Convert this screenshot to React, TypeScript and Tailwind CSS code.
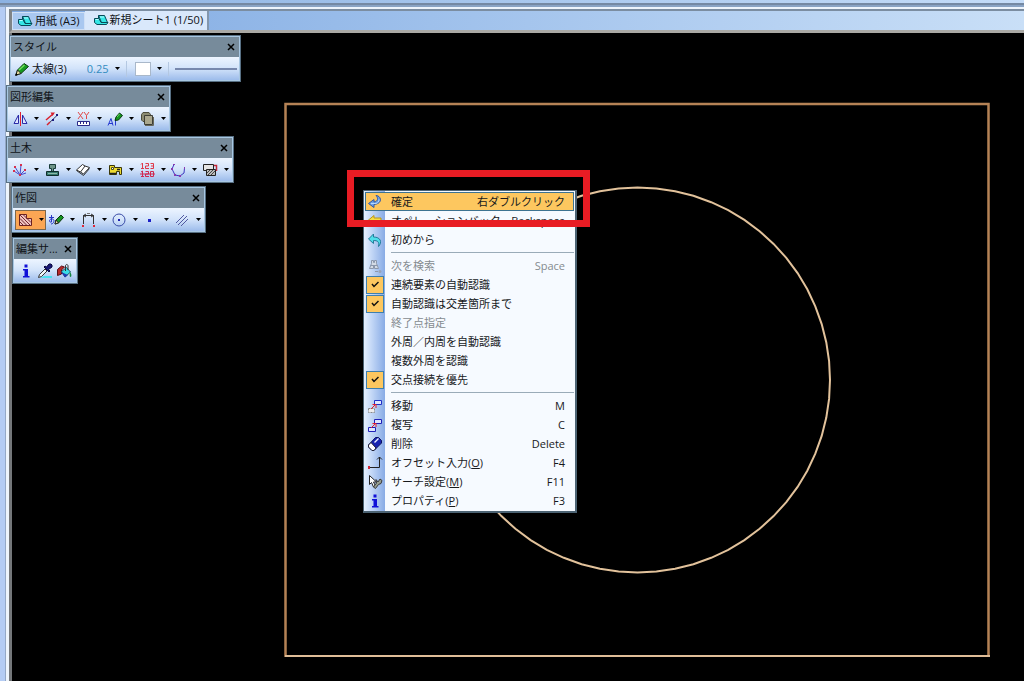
import React from "react";

type IconProps = { children: React.ReactNode };

function Icon({ children }: IconProps) {
  return (
    <svg viewBox="0 0 16 16" className="h-4 w-4 shrink-0" fill="none" aria-hidden="true">
      {children}
    </svg>
  );
}

function Arrow() {
  return (
    <svg viewBox="0 0 5 3" className="h-[3px] w-[5px] shrink-0" aria-hidden="true">
      <path d="M0 0h5L2.5 3z" fill="#000" />
    </svg>
  );
}

const SheetIcon = () => (
  <svg viewBox="0 0 16 12" className="h-3 w-4 shrink-0" aria-hidden="true">
    <path d="M5.5 1.5h6l3 7h-6z" fill="#35e6e6" stroke="#064a58" />
    <path d="M5.5 1.5v3h-4v4l2.5 2h9.500l1.500-2H8l-2-4" fill="#35e6e6" stroke="#064a58" />
    <path d="M2.5 5.500h3M7 3h4" stroke="#b5ffff" />
  </svg>
);

const PencilIcon = () => (
  <Icon>
    <path d="M2 14l1.5-5L10 2.5l4.500 3L7 12.500z" fill="#169a20" stroke="#0b3d10" />
    <path d="M5 9l5.500-5" stroke="#6fe05a" strokeWidth="1.5" />
    <path d="M2 14l1.500-5L7 12.500z" fill="#f4e9a6" stroke="#222" />
    <path d="M1 15l1-3 2 2z" fill="#000" />
  </Icon>
);
const MirrorIcon = () => (
  <Icon>
    <path d="M6.5 4v8.500H2zM10.500 4v8.500H15z" fill="#dfe5ff" stroke="#2a2aa8" />
    <path d="M8.5 1v14" stroke="#e02030" />
  </Icon>
);
const TrimIcon = () => (
  <Icon>
    <path d="M2 9l7-6" stroke="#d8202c" strokeWidth="1.5" />
    <path d="M6.500 1.5H11L8.500 5z" fill="#d8202c" />
    <path d="M3 14L14 3.500" stroke="#333a66" />
    <path d="M3 14l3-3" stroke="#d8202c" strokeWidth="1.5" />
    <path d="M12 3h2v2h-2zM8 8h2v2H8z" fill="#1c1c80" />
  </Icon>
);
const XYIcon = () => (
  <Icon>
    <path d="M3 1l5 7M8 1L3 8M9 1l2.500 3.500L14 1M11.500 4.500V8" stroke="#e04848" />
    <path d="M2.500 10.500h12v4h-12z" fill="#fff" stroke="#2a2a88" />
    <path d="M5.500 11v2M8.500 11v2M11.500 11v2" stroke="#2a2a88" />
  </Icon>
);
const TextPencilIcon = () => (
  <Icon>
    <path d="M1 14.500l3-7 2 7M2 12.500h4M8.500 14.500V8" stroke="#2438d0" />
    <path d="M8 9.500l1-3.500 3.500-4 3 2.500-4 4.500z" fill="#159520" stroke="#0a3510" />
    <path d="M10 6l2.500-3" stroke="#6ce060" />
  </Icon>
);
const LayersIcon = () => (
  <Icon>
    <path d="M2.500 3.500l1.500-2h6l1.500 2v6l-1.500 1H4L2.500 9z" fill="#8b8b72" stroke="#4b4b3c" />
    <path d="M5.500 4.500h8v9h-8z" fill="#aaa78e" stroke="#3e3e36" />
    <path d="M6 14.500h8.500V6" stroke="#68685c" />
  </Icon>
);
const RaysIcon = () => (
  <Icon>
    <path d="M8 13L3 5M8 13l1-10M8 13l5-5M8 13l6-2M8 13L2 9" stroke="#4a4ac8" />
    <path d="M2 4h2v2H2zM8 2h2v2H8zM12 7h2v2h-2zM7 12h2v2H7zM1 8h2v2H1z" fill="#d8304c" />
  </Icon>
);
const StampIcon = () => (
  <Icon>
    <path d="M5.500 2.500h6v4h-2v3h-2v-3h-2z" fill="#6d9488" stroke="#173c38" />
    <path d="M2.500 9.500h12v4h-12z" fill="#377a70" stroke="#102e2c" />
    <path d="M4 11.500h9" stroke="#8eb9a8" />
  </Icon>
);
const BookIcon = () => (
  <Icon>
    <path d="M1.500 8l6-5.500L10 4l4.500 1.500-6 6.500L5.500 10z" fill="#fff" stroke="#333" />
    <path d="M10 4l-4.500 6M1.500 8.500l7 5 6-7" stroke="#333" />
  </Icon>
);
const ExcavatorIcon = () => (
  <Icon>
    <path d="M2.500 3.500h5v2h7v7h-2v-3h-3v3h-7z" fill="#eedb30" stroke="#3a3708" />
    <path d="M4.500 5.500h2v2h-2z" fill="#fff" stroke="#4b4b20" />
    <path d="M3 11.500h6M10 7.500h3" stroke="#222" strokeWidth="1.5" />
  </Icon>
);
const NumbersIcon = () => (
  <Icon>
    <path d="M2 2.500L3.500 1v5.500M2 6.500h3M6.500 1.500h3v2.500h-3v2.500H10M11.500 1.500h3v5h-3M12 4h3" stroke="#e03848" />
    <path d="M2 10l1.500-1v5.500M2 14.500h3M6.500 9.500h3V12h-3v2.500H10M11.500 9.500h3v5h-3zM1 12h15" stroke="#d02850" />
  </Icon>
);
const PolygonIcon = () => (
  <Icon>
    <path d="M4 2.500L2 7l3 6 5 1 4-3 .5-5" stroke="#3c38c0" />
    <path d="M3 2h2v1H3zM1 6h2v2H1zM4 12h2v2H4zM9 13h2v2H9zM14 5h1v2h-1z" fill="#8a3ab0" />
  </Icon>
);
const HatchWindowIcon = () => (
  <Icon>
    <path d="M1.500 2.500h10v6h-10z" fill="#e4e4e4" stroke="#222" />
    <path d="M12 3.500h2.500V9" stroke="#c02838" strokeWidth="1.5" />
    <path d="M4.500 7.500h9v6h-9z" fill="#bbb" stroke="#222" />
    <path d="M5 11l3-3M6 13l5-5M9 13l4-4" stroke="#444" />
  </Icon>
);
const HatchIcon = () => (
  <Icon>
    <path d="M2.500 2.500h7v4h5v7h-12z" fill="#efc3c0" stroke="#6a2020" />
    <path d="M3 3l10.500 10.500M3 6.500l7 7M3 10l3.500 3.500M6 2.500l8 8M9.500 9.500l4 4" stroke="#742830" />
  </Icon>
);
const KanaPencilIcon = () => (
  <Icon>
    <path d="M1 5.500h5M3.500 3v7c-3 1-2.500-4 1-3 3 1 1 5-1.500 5" stroke="#2838c8" />
    <path d="M7 12l1-4 5-5 2.500 2.500-5 5.500z" fill="#159520" stroke="#0a3510" />
    <path d="M7 12l1-4 2.500 3z" fill="#f0e8a8" stroke="#222" />
  </Icon>
);
const DimensionIcon = () => (
  <Icon>
    <path d="M3.500 12V3.500h10V12M6 2L3.500 3.500 6 5M11 2l2.500 1.500L11 5" stroke="#333" />
    <path d="M7 1.500h3" stroke="#777" />
    <path d="M2 13h2v2H2zM13 13h2v2h-2z" fill="#e02838" />
  </Icon>
);
const CircleIcon = () => (
  <Icon>
    <circle cx="8" cy="8" r="6" stroke="#3a4ca8" />
    <path d="M7 7h2v2H7z" fill="#1c20b0" />
  </Icon>
);
const PointIcon = () => (
  <Icon>
    <path d="M6 7h3v3H6z" fill="#1c20c8" />
  </Icon>
);
const ParallelIcon = () => (
  <Icon>
    <path d="M2 11l8-8M4 13l9-9M7 14l7-7" stroke="#5058a0" />
  </Icon>
);
const InfoIcon = () => (
  <Icon>
    <path d="M6.500 1.500h3v3h-3zM5 6h5v7h1.500v1.500H5V13h1.500V7.500H5z" fill="#1010d8" />
  </Icon>
);
const DropperIcon = () => (
  <Icon>
    <path d="M7 13h8v2H3z" fill="#48e0ec" />
    <path d="M1.500 14.500l1-3L8 6l2 2-5.500 5.500z" fill="#eef6f8" stroke="#333" />
    <path d="M7 4l5 5 1-1-1.500-1.500L15 4V2l-1-1h-2L9.500 4 8 3z" fill="#1a1a78" stroke="#080840" />
  </Icon>
);
const PaintIcon = () => (
  <Icon>
    <path d="M1.500 12.500V6.500l4-3.500 3 1-3 3v4z" fill="#b82828" stroke="#581018" />
    <path d="M5.500 8.500L10.500 4.500l4 4.500-5.500 5z" fill="#39dce6" stroke="#20526a" />
    <path d="M9.500 8V3c0-2 2.500-2 2.500 0v4" stroke="#333" />
    <path d="M5 9l7 3-3 2.500z" fill="#203ab0" />
    <path d="M14 9c2 2 1.500 5 .5 5s-1-2-.5-5" fill="#168840" />
  </Icon>
);

const ConfirmIcon = () => (
  <Icon>
    <path
      d="M9 1.500c5 0 7.500 8-2 9V13.500L1.500 9.500 7 5.500V8C11 7.500 11.500 4 9 1.500z"
      fill="#6da2ea"
      stroke="#3157a2"
    />
    <path d="M4 9.500h5c2-.5 3-2 3-4" stroke="#b7d8ff" />
  </Icon>
);
const BackIcon = () => (
  <Icon>
    <path d="M1.500 7L7 2.500V5h7v4H7v2.500z" fill="#f4dd45" stroke="#b99518" />
  </Icon>
);
const RestartIcon = () => (
  <Icon>
    <path d="M6.500 2v3c7 0 9 5 5 9.500 1-5-1-6-5-6v3L1.500 7z" fill="#50dfea" stroke="#237c9b" />
  </Icon>
);
const BinocularsIcon = () => (
  <Icon>
    <path d="M4.500 2.500h2v2h1v-2h2v3l2 5h-4v-3h-1v3h-4l2-5z" fill="#d4dbe5" stroke="#8c98ac" />
    <path d="M3.500 7.500h7M8 13.500h3" stroke="#8c98ac" />
    <circle cx="13" cy="13.500" r="1.500" fill="#98a4b8" />
  </Icon>
);
const MoveIcon = () => (
  <Icon>
    <path d="M7.500 2.500h7v4h-7z" fill="#dce6ff" stroke="#2030c8" />
    <path d="M1.500 10.500h6v4h-6z" fill="#eee" stroke="#888" strokeDasharray="2 1" />
    <path d="M4 11l5-5M5.500 6.500H9V10" stroke="#e02030" />
  </Icon>
);
const CopyIcon = () => (
  <Icon>
    <path d="M7.500 2.500h7v4h-7zM1.500 10.500h7v4h-7z" fill="#dce6ff" stroke="#2020b8" />
    <path d="M4 11l5-5M5.500 6.500H9V10" stroke="#e02030" />
  </Icon>
);
const EraserIcon = () => (
  <Icon>
    <path d="M1.500 9L8.500 1.500h3l3 3V7L7 14.500H5L1.500 11z" fill="#1824b0" stroke="#0a1060" />
    <path d="M1.500 9L4 6.500 9 12l-2 2.500H5L1.500 11z" fill="#fff" stroke="#223" />
    <path d="M7.500 6.500l4-4" stroke="#e8eeff" strokeWidth="1.5" />
  </Icon>
);
const OffsetIcon = () => (
  <Icon>
    <path d="M2 12.500h10.500V2M10 4.500L12.500 2 15 4.500" stroke="#222" />
    <path d="M1 11h2v3H1z" fill="#d02838" />
  </Icon>
);
const SearchSettingIcon = () => (
  <Icon>
    <path d="M2.500 1.500v9l2-2 2 4.500 2-1-2-4h3z" fill="#fff" stroke="#222" />
    <path d="M9 5.500L11 8l2-3 2 1.500-1 3-2.500 1-3 4-2-1.500 3-4z" fill="#98a090" stroke="#383838" />
  </Icon>
);

type Tool = { label: string; icon: () => React.ReactElement; active?: boolean };

function Palette({ title, className, children }: { title: string; className: string; children: React.ReactNode }) {
  return (
    <section
      aria-label={title}
      className={`absolute border border-[#587084] bg-[#a8c7e2] p-px ${className}`}
    >
      <header className="flex h-5 items-center justify-between bg-[#778b9b] pl-0.5">
        <h2 className="whitespace-nowrap">{title}</h2>
        <button type="button" aria-label="閉じる" className="flex h-4 w-4 items-center justify-center">
          <svg viewBox="0 0 8 8" className="h-2 w-2" aria-hidden="true">
            <path d="M1 1l6 6M7 1L1 7" stroke="#000" strokeWidth="1.5" />
          </svg>
        </button>
      </header>
      <div className="flex h-[23px] items-center bg-linear-to-b from-[#edf5ff] via-[#d2e3fa] to-[#9dbceb]">{children}</div>
    </section>
  );
}

function Tools({ items }: { items: Tool[] }) {
  return (
    <div className="flex flex-1 pr-px pl-0.5">
      {items.map(({ label, icon: Glyph, active }) => (
        <button
          key={label}
          type="button"
          aria-label={label}
          aria-haspopup="menu"
          className={`flex h-5 flex-1 items-center justify-center gap-1.5 border ${
            active ? "border-[#7d684c] bg-[#fba654]" : "border-transparent"
          }`}
        >
          <Glyph />
          <Arrow />
        </button>
      ))}
    </div>
  );
}

const editTools: Tool[] = [
  { label: "反転", icon: MirrorIcon },
  { label: "線編集", icon: TrimIcon },
  { label: "座標", icon: XYIcon },
  { label: "文字編集", icon: TextPencilIcon },
  { label: "重なり", icon: LayersIcon },
];
const civilTools: Tool[] = [
  { label: "放射", icon: RaysIcon },
  { label: "測点", icon: StampIcon },
  { label: "図面", icon: BookIcon },
  { label: "建機", icon: ExcavatorIcon },
  { label: "数値", icon: NumbersIcon },
  { label: "区画", icon: PolygonIcon },
  { label: "切り出し", icon: HatchWindowIcon },
];
const drawTools: Tool[] = [
  { label: "ハッチング", icon: HatchIcon, active: true },
  { label: "文字", icon: KanaPencilIcon },
  { label: "寸法", icon: DimensionIcon },
  { label: "円", icon: CircleIcon },
  { label: "点", icon: PointIcon },
  { label: "平行線", icon: ParallelIcon },
];

type Entry = {
  label: string;
  access?: string;
  keys?: string;
  icon?: () => React.ReactElement;
  checked?: boolean;
  disabled?: boolean;
  highlighted?: boolean;
};

const groups: Entry[][] = [
  [
    { label: "確定", keys: "右ダブルクリック", icon: ConfirmIcon, highlighted: true },
    { label: "オペレーションバック", keys: "Backspace", icon: BackIcon },
    { label: "初めから", icon: RestartIcon },
  ],
  [
    { label: "次を検索", keys: "Space", icon: BinocularsIcon, disabled: true },
    { label: "連続要素の自動認識", checked: true },
    { label: "自動認識は交差箇所まで", checked: true },
    { label: "終了点指定", disabled: true },
    { label: "外周／内周を自動認識" },
    { label: "複数外周を認識" },
    { label: "交点接続を優先", checked: true },
  ],
  [
    { label: "移動", keys: "M", icon: MoveIcon },
    { label: "複写", keys: "C", icon: CopyIcon },
    { label: "削除", keys: "Delete", icon: EraserIcon },
    { label: "オフセット入力", access: "O", keys: "F4", icon: OffsetIcon },
    { label: "サーチ設定", access: "M", keys: "F11", icon: SearchSettingIcon },
    { label: "プロパティ", access: "P", keys: "F3", icon: InfoIcon },
  ],
];

function MenuItem({ entry }: { entry: Entry }) {
  const Glyph = entry.icon;
  return (
    <button
      type="button"
      role={entry.checked ? "menuitemcheckbox" : "menuitem"}
      aria-checked={entry.checked}
      disabled={entry.disabled}
      className={`flex h-[19px] w-full items-center border pr-2 text-left whitespace-nowrap ${
        entry.highlighted ? "border-[#3d7391] bg-[#fdc75f]" : "border-transparent"
      } ${entry.disabled ? "text-[#858b90]" : "text-[#17191c]"}`}
    >
      <span className="flex w-[25px] shrink-0 items-center">
        {entry.checked ? (
          <span className="flex h-[18px] w-[18px] items-center justify-center border border-[#3e7fae] bg-[#fdc75f]">
            <svg viewBox="0 0 8 7" className="h-[7px] w-2" fill="none" aria-hidden="true">
              <path d="M1 3l2 2.500L7.500 1" stroke="#111" strokeWidth="1.5" />
            </svg>
          </span>
        ) : (
          Glyph && (
            <span className="pl-px">
              <Glyph />
            </span>
          )
        )}
      </span>
      <span className="flex-1">
        {entry.label}
        {entry.access && (
          <>
            (<u>{entry.access}</u>)
          </>
        )}
      </span>
      <span>{entry.keys}</span>
    </button>
  );
}

const SEGMENTS = 64;
const ringPoints = Array.from({ length: SEGMENTS }, (_, i) => {
  const angle = (i / SEGMENTS) * Math.PI * 2;
  return `${(637.5 + 192.5 * Math.cos(angle)).toFixed(1)},${(380 + 192.5 * Math.sin(angle)).toFixed(1)}`;
}).join(" ");

export default function App() {
  return (
    <div className="relative flex h-screen flex-col overflow-hidden bg-[#b4ccf4] font-['Open_Sans','Noto_Sans_CJK_JP',sans-serif] text-[11px] leading-4 text-[#101418]">
      <div className="h-[3px] shrink-0 bg-linear-to-r from-[#8cb2e2] to-[#c4dcf8]" />
      <div className="h-1 shrink-0 border-t-2 border-[#7589a3] bg-[#89a3c4]" />
      <div className="flex min-h-0 flex-1">
        <div className="w-[6px] shrink-0 border-r border-[#94a8c6] bg-[#b4ccf4]" />
        <div className="flex min-w-0 flex-1 flex-col border-t-2 border-l-3 border-[#edf4fc]">
          <nav
            role="tablist"
            aria-label="シート"
            className="flex h-6 shrink-0 items-end border-t-2 border-b-3 border-l-3 border-t-[#7b8da1] border-b-[#aaa9a5] border-l-[#7f8487] bg-linear-to-r from-[#80aae2] to-[#c9dff7]"
          >
            <button
              type="button"
              role="tab"
              aria-selected="false"
              className="flex h-[18px] items-center gap-0.5 border border-[#cfe0f6] bg-[#a9c8f0] px-1 whitespace-nowrap"
            >
              <SheetIcon />
              用紙 (A3)
            </button>
            <button
              type="button"
              role="tab"
              aria-selected="true"
              className="flex h-[19px] items-center gap-px border-r-2 border-r-[#8397ae] bg-[#d9e8fb] pr-1 pb-0.5 pl-2 whitespace-nowrap"
            >
              <SheetIcon />
              新規シート1 (1/50)
            </button>
          </nav>
          <main className="relative min-h-0 flex-1 border-l-3 border-[#74777a] bg-black">
            <svg
              viewBox="12 33 1012 648"
              preserveAspectRatio="xMinYMin meet"
              className="absolute inset-0 h-full w-full"
              fill="none"
              role="img"
              aria-label="図面"
            >
              <path d="M285.5 657V104H988.500V657" stroke="#b58255" strokeWidth="2.500" />
              <path d="M285 656H990" stroke="#dfbd98" strokeWidth="2" />
              <polygon points={ringPoints} stroke="#e2c29b" strokeWidth="2" />
            </svg>
          </main>
        </div>
      </div>

      <Palette title="スタイル" className="top-[35px] left-[9px] w-[232px]">
        <button type="button" className="flex items-center gap-0.5 pl-[3px] whitespace-nowrap">
          <PencilIcon />
          太線(3)
        </button>
        <label className="ml-5 flex items-center gap-1 border-r border-[#b4c8e2] pr-1.5">
          <select
            aria-label="線幅"
            defaultValue="0.25"
            className="w-6 appearance-none bg-transparent text-[11px] text-[#338cc0]"
          >
            <option>0.25</option>
          </select>
          <Arrow />
        </label>
        <button
          type="button"
          aria-label="線色"
          className="flex items-center gap-1.5 border-r border-[#b4c8e2] pr-1.5 pl-2"
        >
          <span className="h-3.5 w-4 border border-[#a9b8ca] bg-white" />
          <Arrow />
        </button>
        <button type="button" aria-label="線種" className="flex h-full flex-1 items-center pr-0.5 pl-1.5">
          <span className="h-0.5 flex-1 bg-[#7788ad]" />
        </button>
      </Palette>
      <Palette title="図形編集" className="top-[85px] left-[6px] w-[165px]">
        <Tools items={editTools} />
      </Palette>
      <Palette title="土木" className="top-[136px] left-[6px] w-[228px]">
        <Tools items={civilTools} />
      </Palette>
      <Palette title="作図" className="top-[186px] left-[11px] w-[195px]">
        <Tools items={drawTools} />
      </Palette>
      <Palette title="編集サ..." className="top-[237px] left-[12px] w-[66px]">
        <div className="flex flex-1 justify-around px-0.5">
          <button type="button" aria-label="情報">
            <InfoIcon />
          </button>
          <button type="button" aria-label="スポイト">
            <DropperIcon />
          </button>
          <button type="button" aria-label="塗りつぶし">
            <PaintIcon />
          </button>
        </div>
      </Palette>

      <div
        role="menu"
        className="absolute top-[190px] left-[363px] w-[214px] border border-r-2 border-b-2 border-[#4c6373] bg-[#f6faff] bg-linear-to-r from-[#e6f1ff] to-[#88abe5] bg-size-[21px_100%] bg-no-repeat p-px"
      >
        {groups.map((group, index) => (
          <div key={group[0].label} role="group">
            {index > 0 && <hr className="my-[3px] ml-[26px] border-[#9aabb8]" />}
            {group.map((entry) => (
              <MenuItem key={entry.label} entry={entry} />
            ))}
          </div>
        ))}
      </div>
      <div className="pointer-events-none absolute top-[170px] left-[347px] h-[57px] w-[243px] border-7 border-[#e81c24]" />
    </div>
  );
}
